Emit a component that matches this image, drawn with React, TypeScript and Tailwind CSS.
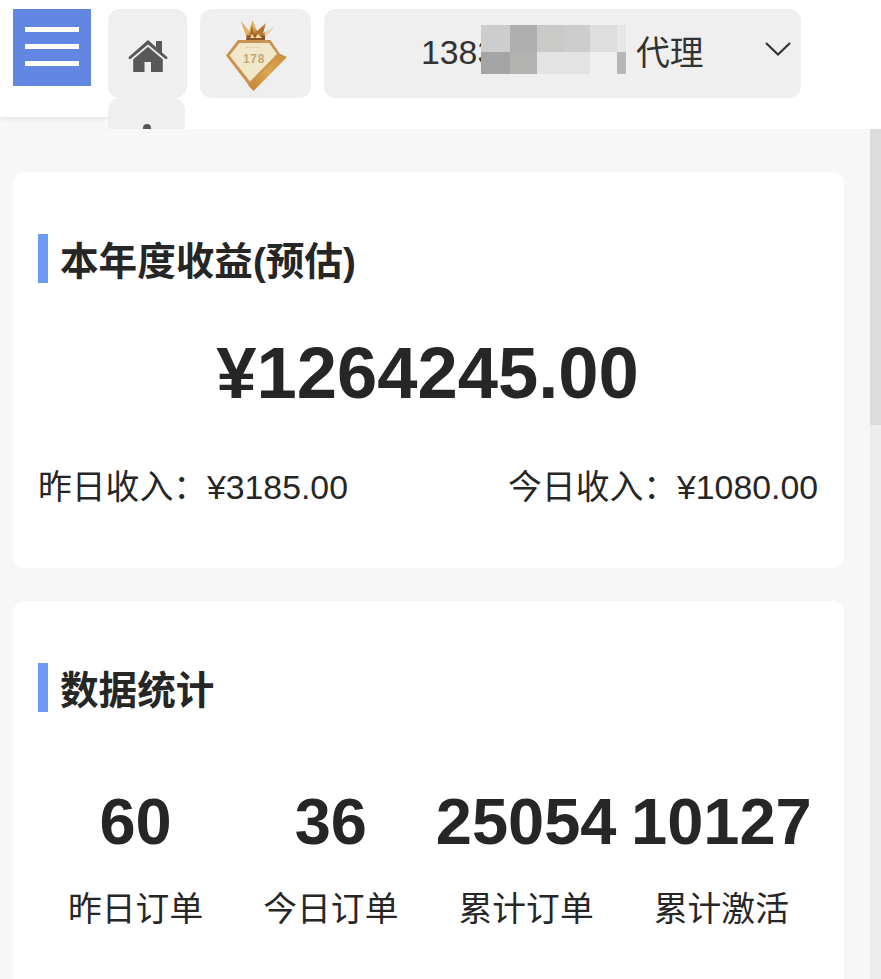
import type { ReactNode } from 'react'

const STATS = [
  { value: '60', label: '昨日订单' },
  { value: '36', label: '今日订单' },
  { value: '25054', label: '累计订单' },
  { value: '10127', label: '累计激活' },
]

function HomeIcon() {
  return (
    <svg width="40" height="33" viewBox="0 0 40 33" fill="#585858" className="shrink-0">
      <path d="M20 0 L28 7 V1 H34 V12.5 L39.3 17 Q40 18 39 18.8 Q38 19.6 36.8 18.6 L20 4.4 L3.2 18.6 Q2 19.6 1 18.8 Q0 18 0.7 17 Z" />
      <path d="M20 6.8 L34.8 19.2 V32 H23 V22 H16.5 V32 H5.2 V19.2 Z" />
    </svg>
  )
}

function CrownBadge() {
  return (
    <svg width="64" height="76" viewBox="0 0 64 76" className="shrink-0">
      <defs>
        <linearGradient id="crown" x1="0" y1="0" x2="1" y2="1">
          <stop offset="0" stopColor="#d9a550" />
          <stop offset="0.45" stopColor="#e3b568" />
          <stop offset="0.65" stopColor="#a8682a" />
          <stop offset="1" stopColor="#dca960" />
        </linearGradient>
        <linearGradient id="side" x1="1" y1="0" x2="0" y2="1">
          <stop offset="0" stopColor="#c98c35" />
          <stop offset="0.5" stopColor="#dba751" />
          <stop offset="1" stopColor="#c4822f" />
        </linearGradient>
      </defs>
      <path d="M17 5 L25 15 L28.5 4 L33 15 L42 7 L39 17 L44 15 L40 23 H23 Z" fill="url(#crown)" />
      <path d="M41 16 L51 10 L40 23 Z" fill="#ead3ae" />
      <path d="M28 9 L30 19 L26 18 Z" fill="#a76522" />
      <path d="M39 10 L37 19 L33 18 Z" fill="#b27a35" />
      <path d="M23 19.5 H41 V24 H22 Z" fill="#8a5426" />
      <path d="M26 22 L28 18 L31 22 L34 18 L38 22 Z" fill="#f2d9a0" />
      <path d="M54 37 L63 41 L29.5 75 L24 69 Z" fill="url(#side)" />
      <path d="M14 24 H46.5 L56 38 L25 69.5 L2 39.5 Z" fill="#c99152" />
      <path d="M15.5 27 H45 L53 38 L26 65.5 L5.5 39.5 Z" fill="#f1e7c9" />
      <path d="M22 31.5 H36" stroke="#ddcba6" strokeWidth="1" strokeDasharray="2 1" />
      <text
        x="30"
        y="47"
        textAnchor="middle"
        fontSize="12"
        fontWeight="700"
        letterSpacing="0.6"
        fill="#c6a877"
        className="font-['Liberation_Sans',sans-serif]"
      >
        178
      </text>
    </svg>
  )
}

// Hidden digits of the account number
function NumberMask() {
  return (
    <div className="absolute top-4 left-[157px] flex h-[49px] w-[145px] flex-col">
      <div className="flex h-[27px]">
        <span className="w-[29px] bg-[#cdcdcd]" />
        <span className="w-[27px] bg-[#afafaf]" />
        <span className="w-[27px] bg-[#c9c9c8]" />
        <span className="w-[26px] bg-[#cdcdcd]" />
        <span className="w-[27px] bg-[#dedede]" />
        <span className="w-[9px] bg-[#e6e6e6]" />
      </div>
      <div className="flex h-[22px]">
        <span className="w-[29px] bg-[#a5a5a5]" />
        <span className="w-[27px] bg-[#b3b3b2]" />
        <span className="w-[53px] bg-[#e3e3e3]" />
        <span className="w-[27px] bg-[#efefef]" />
        <span className="w-[9px] bg-[#b7b7b7]" />
      </div>
    </div>
  )
}

function Header() {
  return (
    <header className="flex h-[129px] shrink-0 overflow-hidden bg-white">
      <div className="w-[108px] shrink-0 overflow-hidden bg-[#f7f7f7]">
        <div className="h-[117px] bg-white pt-[9px] pl-[13px] shadow-[0_1px_6px_rgba(0,0,0,0.1)]">
          <button className="flex h-[77px] w-[78px] flex-col items-center gap-3 bg-[#6187e3] pt-[18px]">
            <span className="h-[5px] w-[54px] shrink-0 bg-white" />
            <span className="h-[5px] w-[54px] shrink-0 bg-white" />
            <span className="h-[5px] w-[54px] shrink-0 bg-white" />
          </button>
        </div>
      </div>
      <div className="flex w-[79px] shrink-0 flex-col pt-[9px]">
        <button className="flex h-[89px] shrink-0 justify-center rounded-xl bg-[#efefef] pt-[31px]">
          <HomeIcon />
        </button>
        <button className="flex h-[89px] w-[77px] shrink-0 justify-center rounded-xl bg-[#efefef] pt-[26px]">
          <span className="size-[8px] rounded-full bg-[#585858]" />
        </button>
      </div>
      <button className="mt-[9px] ml-[13px] flex h-[89px] w-[111px] shrink-0 justify-center rounded-xl bg-[#efefef] pt-[7px]">
        <CrownBadge />
      </button>
      <button className="relative mt-[9px] ml-[13px] flex h-[89px] w-[477px] shrink-0 items-center rounded-xl bg-[#efefef] pl-[97px] text-[#333]">
        <span className="w-[215px] pb-[2px] text-left">1383</span>
        <span>代理</span>
        <NumberMask />
        <svg width="28" height="16" viewBox="0 0 28 16" className="mb-[10px] ml-[60px]">
          <path d="M2 2 L14 13.5 L26 2" fill="none" stroke="#333" strokeWidth="2.2" />
        </svg>
      </button>
    </header>
  )
}

function Card({ title, children }: { title: string; children: ReactNode }) {
  return (
    <section className="h-[396px] shrink-0 rounded-xl bg-white px-[25px] pt-[62px]">
      <h2 className="flex h-[49px] items-center border-l-10 border-[#6b9bf4] pt-[7px] pl-[12px] text-[38.6px] leading-none font-bold">
        {title}
      </h2>
      {children}
    </section>
  )
}

export default function App() {
  return (
    <div className="flex h-[979px] w-[881px] flex-col overflow-hidden bg-[#f7f7f7] font-['Liberation_Sans','Noto_Sans_CJK_SC',sans-serif] text-[33.8px] leading-none text-[#262626]">
      <Header />
      <div className="flex min-h-0 flex-1">
        <main className="flex flex-1 flex-col gap-[33px] overflow-hidden pt-[43px] pr-[26px] pl-[13px]">
          <Card title="本年度收益(预估)">
            <div className="mt-[54px] pr-[2px] text-center text-[72.4px] leading-[72px] font-bold">¥1264245.00</div>
            <div className="mt-[57px] flex h-[44px] items-center justify-between pr-px">
              <span>昨日收入：¥3185.00</span>
              <span>今日收入：¥1080.00</span>
            </div>
          </Card>
          <Card title="数据统计">
            <div className="mt-[77px] grid grid-cols-4">
              {STATS.map((s) => (
                <div key={s.label} className="flex flex-col items-center">
                  <span className="text-[65px] leading-[65px] font-bold">{s.value}</span>
                  <span className="mt-[33px] leading-[44px]">{s.label}</span>
                </div>
              ))}
            </div>
          </Card>
        </main>
        <div className="w-[11px] shrink-0 bg-[#ededed]">
          <div className="h-[296px] bg-[#dcdcdc]" />
        </div>
      </div>
    </div>
  )
}
